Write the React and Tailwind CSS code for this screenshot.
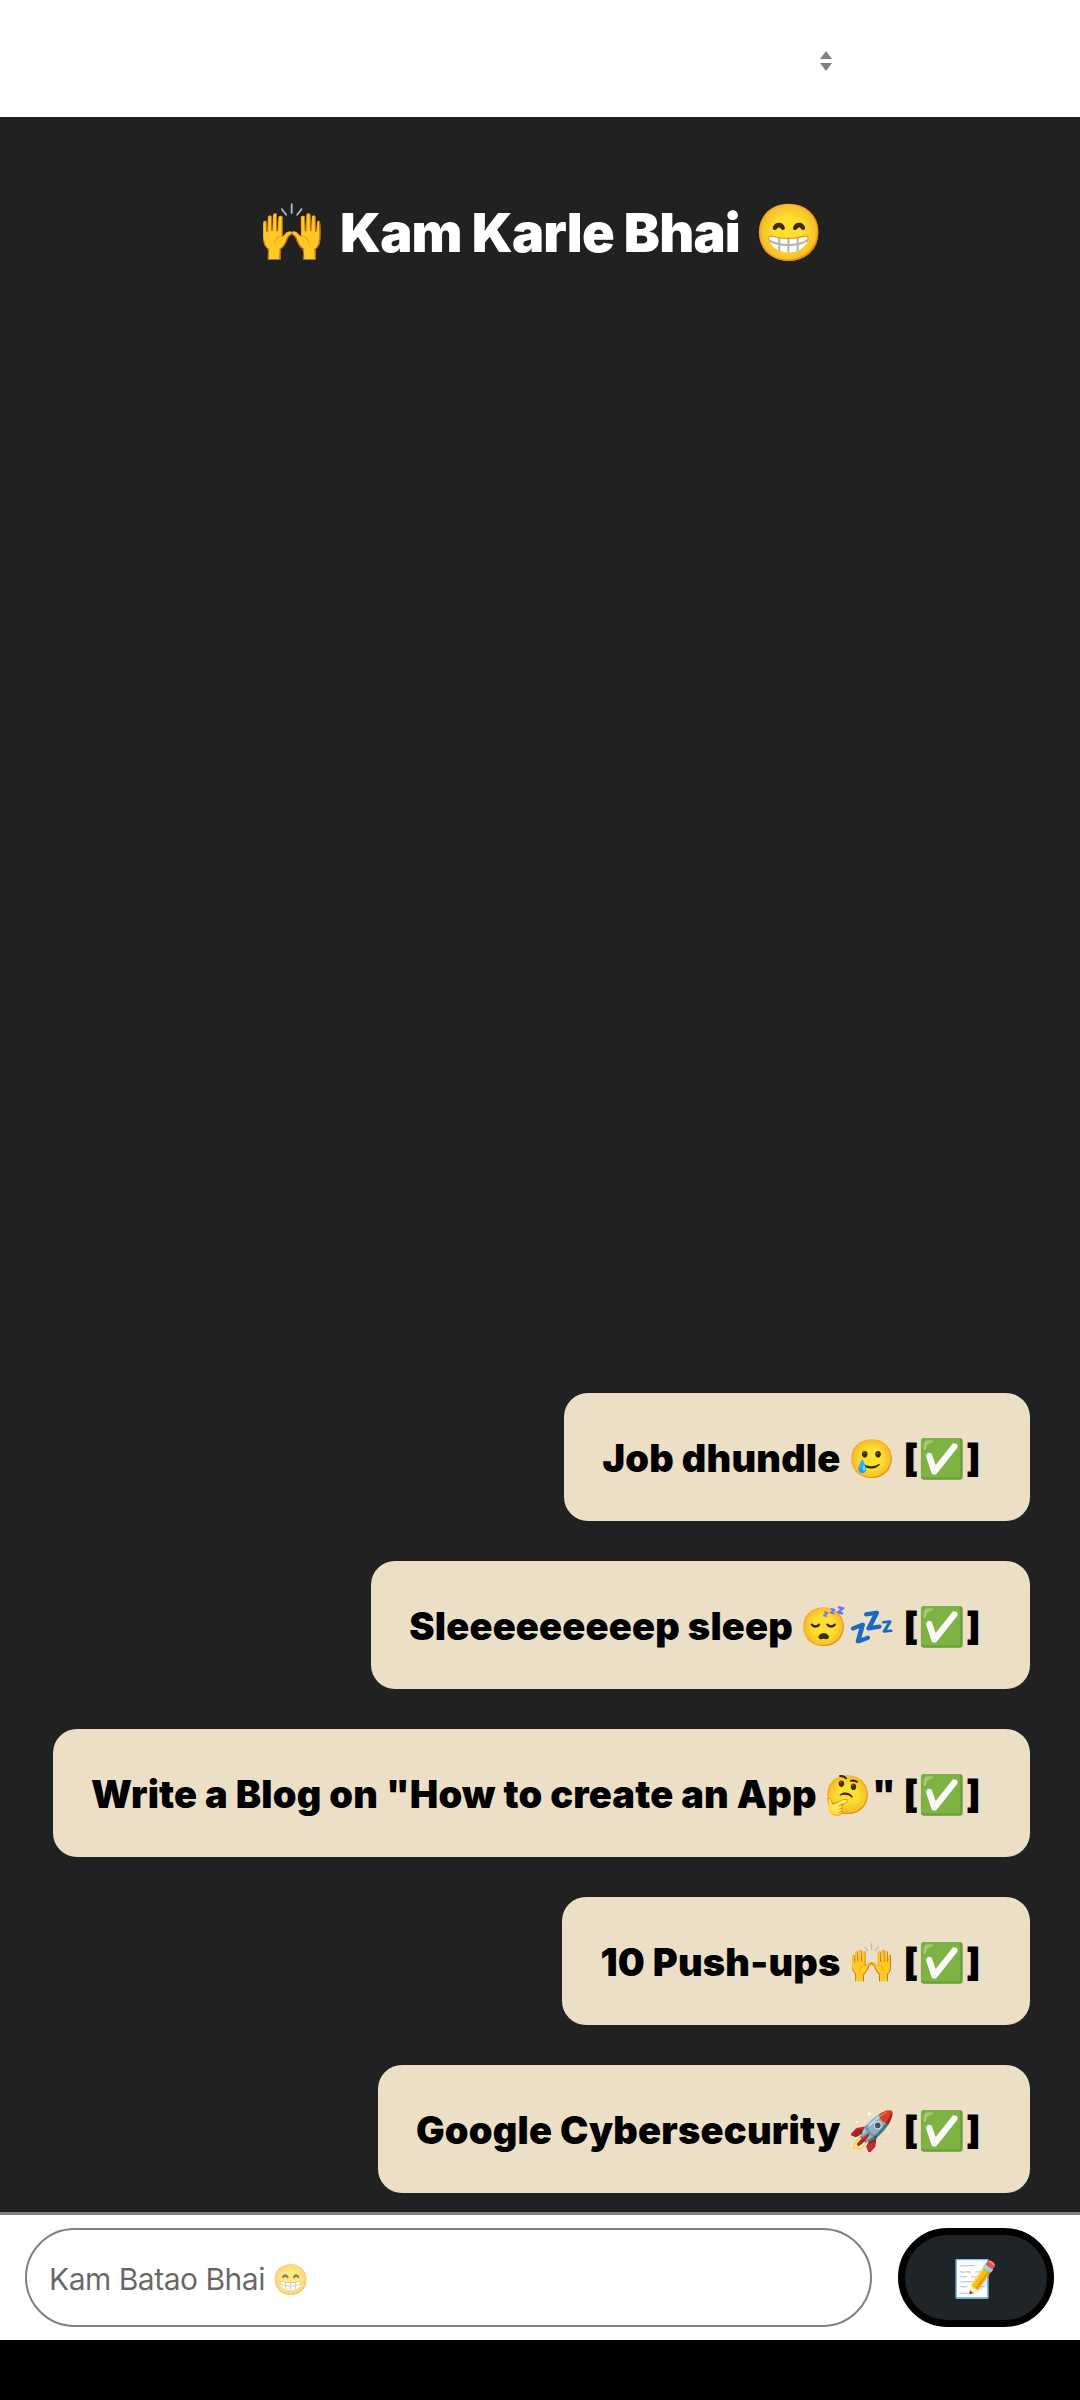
const tasks = [
  'Job dhundle 🥲 [✅]',
  'Sleeeeeeeeep sleep 😴💤 [✅]',
  'Write a Blog on "How to create an App 🤔" [✅]',
  '10 Push-ups 🙌 [✅]',
  'Google Cybersecurity 🚀 [✅]',
];

function SortCaret() {
  return (
    <svg width="12" height="20" viewBox="0 0 12 20" className="fill-[#808080]">
      <path d="M6 0 12 8H0Z" />
      <path d="M0 12H12L6 20Z" />
    </svg>
  );
}

function TaskCard({ text }) {
  return (
    <div className="flex h-32 max-w-[980px] items-center rounded-3xl bg-[#ecdfc6] pt-[3px] pl-[38px] pr-[49px] text-[38px] font-black tracking-[0.2px] whitespace-nowrap text-black">
      {text}
    </div>
  );
}

export default function App() {
  return (
    <div className="flex h-[2400px] flex-col bg-black font-['Inter','Noto_Color_Emoji',sans-serif]">
      {/* Header with the picker */}
      <div className="flex h-[117px] shrink-0 items-center justify-end bg-white pt-[4px] pr-[248px]">
        <SortCaret />
      </div>

      <div className="flex flex-1 flex-col bg-[#212121] pb-[19px]">
        <h1 className="mt-[78px] flex h-[74px] items-center justify-center gap-[14px] text-[54px] font-black tracking-[-0.8px] text-white">
          <span className="text-[56px]">🙌</span>
          <span>Kam Karle Bhai</span>
          <span className="text-[56px]">😁</span>
        </h1>
        <div className="mt-auto flex flex-col items-end gap-10 pr-[50px]">
          {tasks.map((t) => (
            <TaskCard key={t} text={t} />
          ))}
        </div>
      </div>

      {/* Input bar */}
      <div className="flex h-[128px] shrink-0 items-start gap-[26px] border-t-[3px] border-[#808080] bg-white pt-[13px] pl-[25px] pr-[26px]">
        <input
          placeholder="Kam Batao Bhai 😁"
          className="h-[99px] flex-1 rounded-[50px] border-2 border-[#808080] bg-white pt-[2px] pl-[22px] text-[30px] font-normal tracking-[-0.5px] outline-none placeholder:text-black/60"
        />
        <button className="flex h-[99px] w-[156px] items-center justify-center rounded-[50px] border-[7px] border-black bg-[#1f2428] text-[36px]">
          📝
        </button>
      </div>

      <div className="h-[60px] shrink-0 bg-black" />
    </div>
  );
}
